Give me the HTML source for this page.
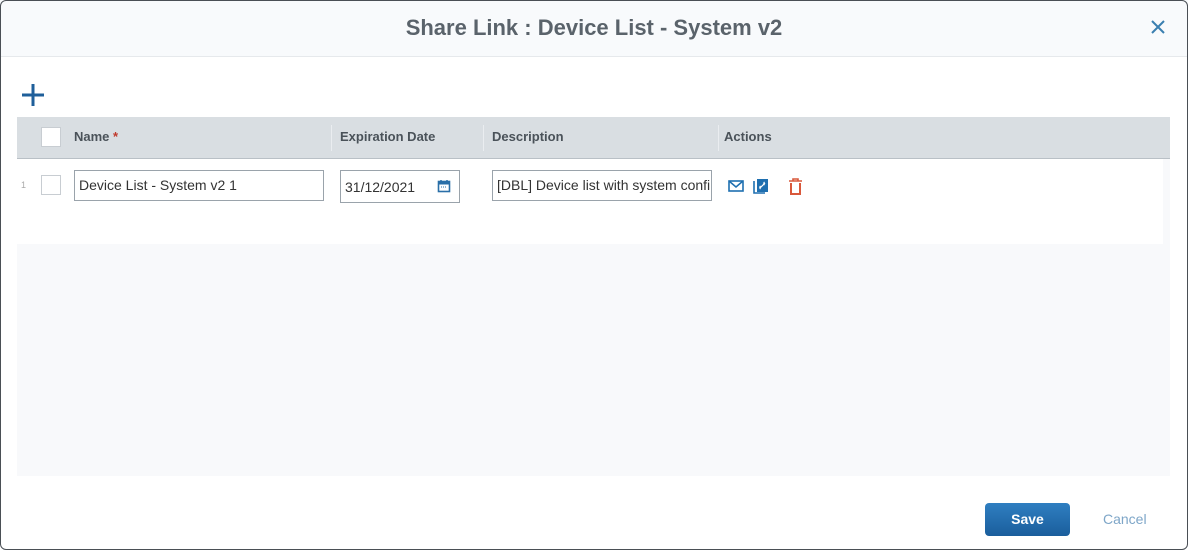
<!DOCTYPE html>
<html><head><style>
*{box-sizing:border-box;margin:0;padding:0}
body{width:1188px;height:550px;background:#fff;font-family:"Liberation Sans",Arial,sans-serif;position:relative;overflow:hidden}
.dlg{position:absolute;left:0;top:0;width:1188px;height:550px;overflow:hidden;background:#fff}
.frame{position:absolute;left:0;top:0;width:1188px;height:550px;border:1px solid #4a4f55;border-radius:6px;pointer-events:none}
.hdr{position:absolute;left:0;top:0;width:100%;height:57px;background:#f8fafc;border-bottom:1px solid #e6e9ec;text-align:center;font-size:22px;font-weight:bold;color:#5a636b;line-height:56px}
.abs{position:absolute}
.th{position:absolute;top:117px;height:42px;left:17px;width:1153px;background:#d9dee2;border-bottom:1px solid #b9c0c6}
.th span{position:absolute;top:12px;font-size:13px;font-weight:bold;color:#4a5259}
.sep{position:absolute;top:8px;width:1px;height:26px;background:#eaedf0}
.cb{position:absolute;width:20px;height:20px;background:#fff;border:1px solid #c8cdd2}
.inp{position:absolute;height:31px;border:1px solid #9aa3ab;background:#fff;font-family:"Liberation Sans",sans-serif;font-size:14px;color:#333;padding:6px 4px;white-space:nowrap;overflow:hidden}
</style></head><body>
<div class="dlg">
<div class="hdr">Share Link : Device List - System v2</div>
<svg class="abs" style="left:1151px;top:20px" width="14" height="14"><path d="M1 1L13 13M13 1L1 13" stroke="#3a7fb0" stroke-width="2"/></svg>
<svg class="abs" style="left:22px;top:84px" width="22" height="22"><path d="M11 0V22M0 11H22" stroke="#1f5f9a" stroke-width="3"/></svg>
<div class="abs" style="left:17px;top:159px;width:1153px;height:317px;background:#f8f9fb"></div>
<div class="abs" style="left:17px;top:159px;width:1146px;height:85px;background:#fff"></div>
<div class="th">
<div class="cb" style="left:24px;top:10px"></div>
<span style="left:57px">Name <b style="color:#c0392b">*</b></span>
<div class="sep" style="left:314px"></div>
<span style="left:323px">Expiration Date</span>
<div class="sep" style="left:466px"></div>
<span style="left:475px">Description</span>
<div class="sep" style="left:701px"></div>
<span style="left:707px">Actions</span>
</div>
<div class="abs" style="left:21px;top:180px;font-size:9px;color:#aaa">1</div>
<div class="cb" style="left:41px;top:175px"></div>
<div class="inp" style="left:74px;top:170px;width:250px">Device List - System v2 1</div>
<div class="inp" style="left:340px;top:170px;width:120px;height:33px;padding-top:8px">31/12/2021</div>
<svg class="abs" style="left:437px;top:179px" width="14" height="14"><rect x="1.5" y="2.5" width="11" height="10" fill="none" stroke="#2a6fa8" stroke-width="1.6"/><rect x="1.5" y="2.5" width="11" height="3" fill="#2a6fa8"/><path d="M4 1V3M10 1V3" stroke="#2a6fa8" stroke-width="1.5"/><path d="M4 8H10" stroke="#2a6fa8" stroke-width="1" stroke-dasharray="1 1"/></svg>
<div class="inp" style="left:492px;top:170px;width:220px">[DBL] Device list with system confi</div>
<svg class="abs" style="left:728px;top:180px" width="16" height="12"><rect x="1" y="1" width="14" height="10" fill="none" stroke="#1e6fb0" stroke-width="1.6"/><path d="M1 1L8 7L15 1" fill="none" stroke="#1e6fb0" stroke-width="1.5"/></svg>
<svg class="abs" style="left:753px;top:178px" width="16" height="17"><path d="M1 3V15H12" fill="none" stroke="#1e6fb0" stroke-width="1.6"/><rect x="4" y="1" width="11" height="13" fill="#1e6fb0"/><path d="M7 10L12 5M7.5 8a2 2 0 0 0 0 3M11.5 7a2 2 0 0 1 0-3" stroke="#fff" stroke-width="1.2" fill="none"/></svg>
<svg class="abs" style="left:788px;top:178px" width="15" height="17"><path d="M1 3H14M5 3V1H10V3" stroke="#d9583b" stroke-width="1.6" fill="none"/><path d="M3 5V16H12V5" stroke="#d9583b" stroke-width="2" fill="none"/></svg>
<div class="abs" style="left:985px;top:503px;width:85px;height:33px;border-radius:4px;background:linear-gradient(#2f7fc1,#1a5e9c);color:#fff;font-weight:bold;font-size:14px;text-align:center;line-height:33px">Save</div>
<div class="abs" style="left:1103px;top:511px;font-size:14px;color:#7ea6c8">Cancel</div>
</div>
<div class="frame"></div>
</body></html>
